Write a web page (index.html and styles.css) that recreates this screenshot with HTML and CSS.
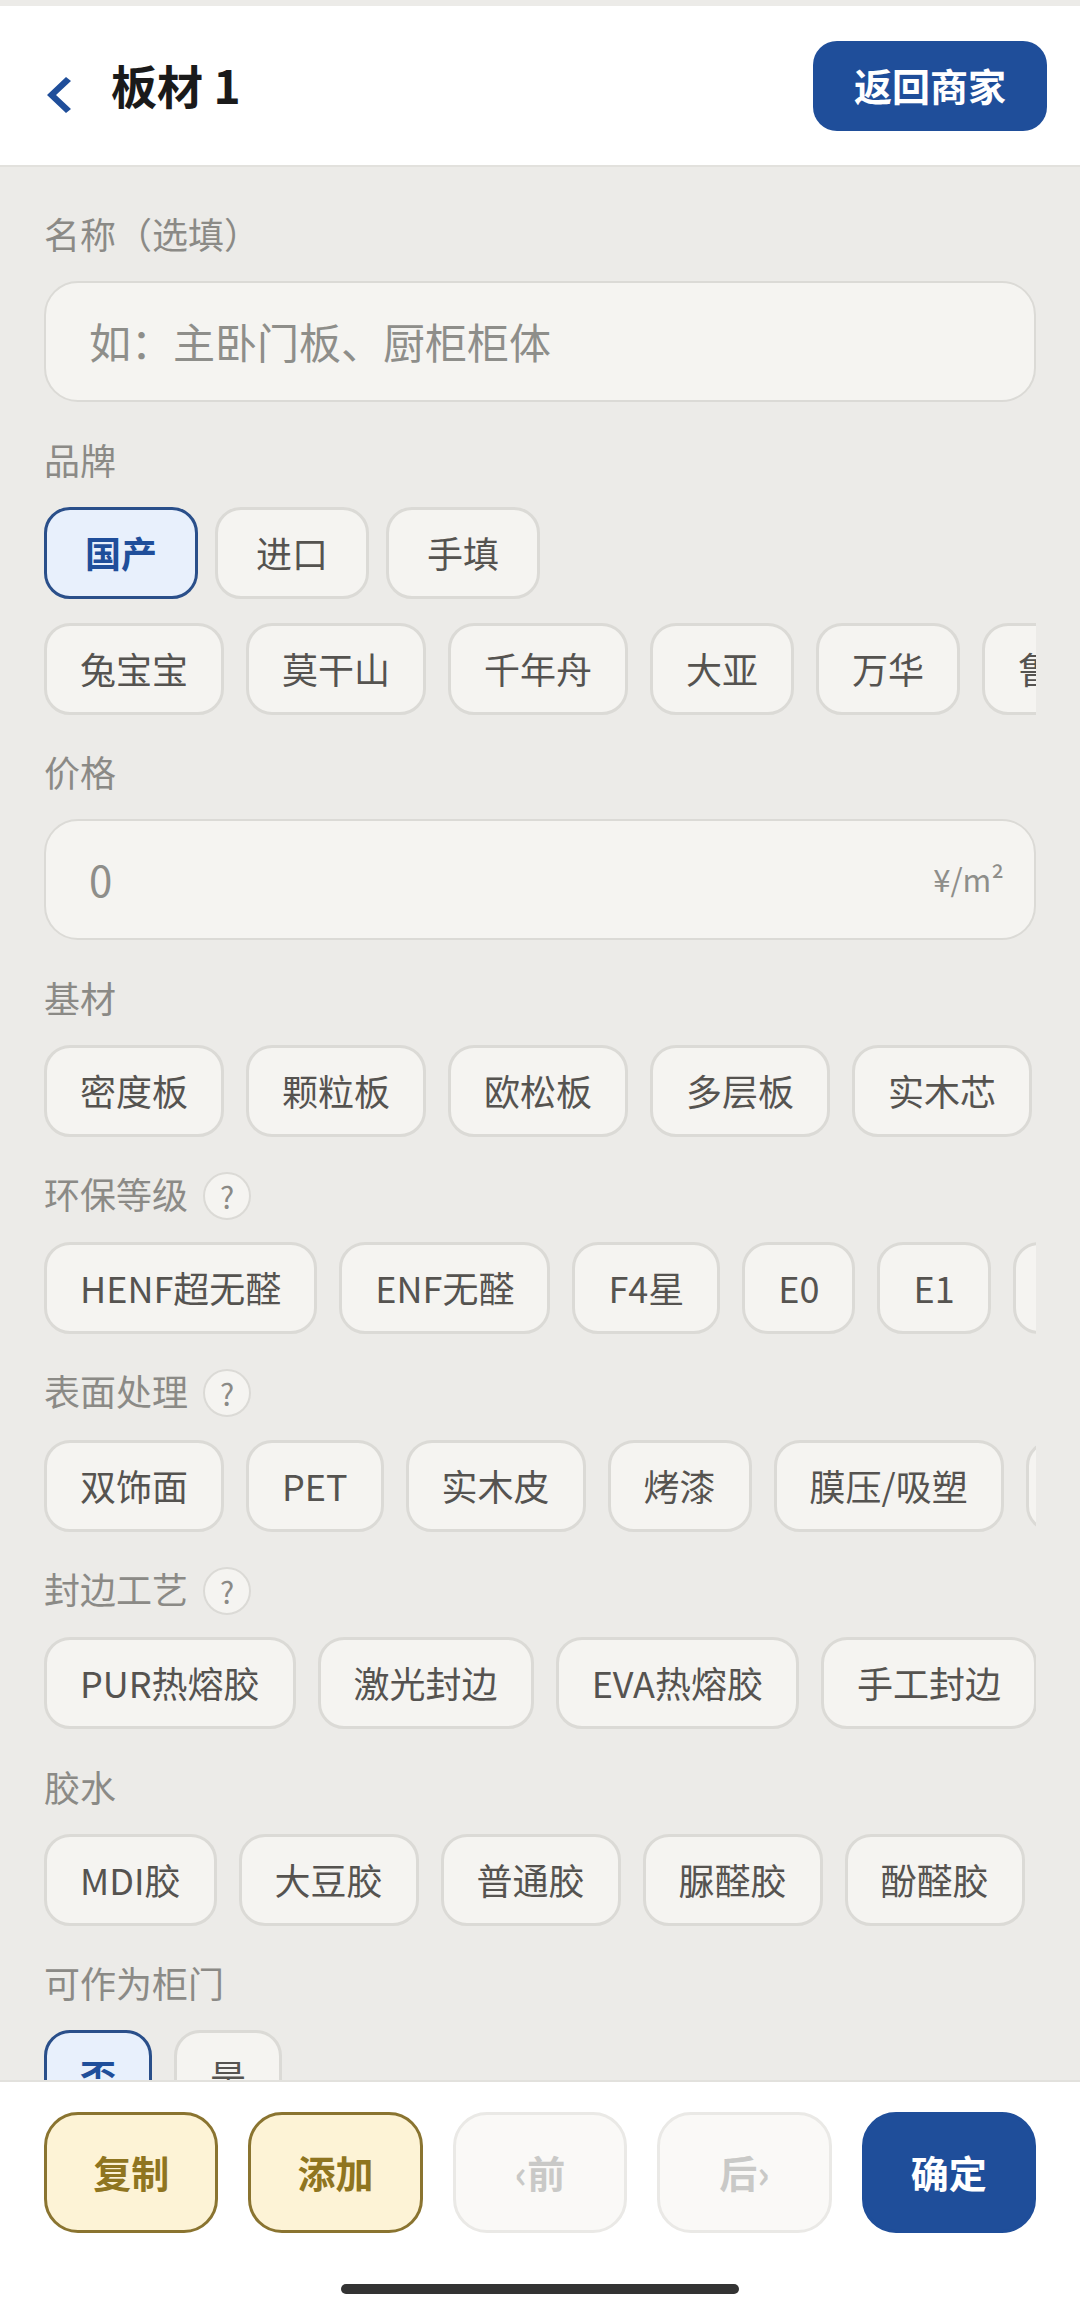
FILE: index.html
```html
<!DOCTYPE html>
<html lang="zh-CN">
<head>
    <meta charset="UTF-8">
    <meta name="viewport" content="width=device-width, initial-scale=1.0">
    <title>板材 1</title>
    <link rel="stylesheet" href="styles.css">
</head>
<body>
    <div class="app">
        <header class="topbar">
            <div class="topbar-left">
                <svg class="back-icon" viewBox="0 0 24 36" aria-hidden="true">
                    <path d="M19 0 L0 18 L19 36 L24 32 L9 18 L24 4 Z"/>
                </svg>
                <h1>板材 1</h1>
            </div>
            <button type="button" class="btn-back">返回商家</button>
        </header>

        <main class="content">
            <section class="form-group">
                <div class="group-label">名称（选填）</div>
                <div class="field"><span class="placeholder">如：主卧门板、厨柜柜体</span></div>
            </section>

            <section class="form-group">
                <div class="group-label">品牌</div>
                <div class="chip-row chip-row-wide">
                    <button type="button" class="chip chip-selected">国产</button>
                    <button type="button" class="chip">进口</button>
                    <button type="button" class="chip">手填</button>
                </div>
                <div class="chip-row chip-row-second">
                    <button type="button" class="chip">兔宝宝</button>
                    <button type="button" class="chip">莫干山</button>
                    <button type="button" class="chip">千年舟</button>
                    <button type="button" class="chip">大亚</button>
                    <button type="button" class="chip">万华</button>
                    <button type="button" class="chip">鲁丽</button>
                </div>
            </section>

            <section class="form-group">
                <div class="group-label">价格</div>
                <div class="field">
                    <span class="placeholder">0</span>
                    <span class="unit">¥/m²</span>
                </div>
            </section>

            <section class="form-group">
                <div class="group-label">基材</div>
                <div class="chip-row">
                    <button type="button" class="chip">密度板</button>
                    <button type="button" class="chip">颗粒板</button>
                    <button type="button" class="chip">欧松板</button>
                    <button type="button" class="chip">多层板</button>
                    <button type="button" class="chip">实木芯</button>
                </div>
            </section>

            <section class="form-group">
                <div class="group-label group-label-help">环保等级 <span class="help">?</span></div>
                <div class="chip-row">
                    <button type="button" class="chip">HENF超无醛</button>
                    <button type="button" class="chip">ENF无醛</button>
                    <button type="button" class="chip">F4星</button>
                    <button type="button" class="chip">E0</button>
                    <button type="button" class="chip">E1</button>
                    <button type="button" class="chip"></button>
                </div>
            </section>

            <section class="form-group">
                <div class="group-label group-label-help">表面处理 <span class="help">?</span></div>
                <div class="chip-row">
                    <button type="button" class="chip">双饰面</button>
                    <button type="button" class="chip">PET</button>
                    <button type="button" class="chip">实木皮</button>
                    <button type="button" class="chip">烤漆</button>
                    <button type="button" class="chip">膜压/吸塑</button>
                    <button type="button" class="chip"></button>
                </div>
            </section>

            <section class="form-group">
                <div class="group-label group-label-help">封边工艺 <span class="help">?</span></div>
                <div class="chip-row">
                    <button type="button" class="chip">PUR热熔胶</button>
                    <button type="button" class="chip">激光封边</button>
                    <button type="button" class="chip">EVA热熔胶</button>
                    <button type="button" class="chip">手工封边</button>
                </div>
            </section>

            <section class="form-group">
                <div class="group-label">胶水</div>
                <div class="chip-row">
                    <button type="button" class="chip">MDI胶</button>
                    <button type="button" class="chip">大豆胶</button>
                    <button type="button" class="chip">普通胶</button>
                    <button type="button" class="chip">脲醛胶</button>
                    <button type="button" class="chip">酚醛胶</button>
                </div>
            </section>

            <section class="form-group">
                <div class="group-label">可作为柜门</div>
                <div class="chip-row">
                    <button type="button" class="chip chip-selected">否</button>
                    <button type="button" class="chip">是</button>
                </div>
            </section>
        </main>

        <footer class="bottombar">
            <div class="actions">
                <button type="button" class="action action-warm">复制</button>
                <button type="button" class="action action-warm">添加</button>
                <button type="button" class="action action-off">‹前</button>
                <button type="button" class="action action-off">后›</button>
                <button type="button" class="action action-primary">确定</button>
            </div>
            <div class="home-bar"></div>
        </footer>
    </div>
</body>
</html>
```

FILE: styles.css
```css
:root {
    --blue: #1f4e9a;
    --page-bg: #ecebe8;
    --field-bg: #f5f4f1;
    --line: #dbdad6;
    --muted: #8b8a86;
}

* {
    box-sizing: border-box;
}

body {
    margin: 0;
    font-family: "Noto Sans CJK SC", "Noto Sans", sans-serif;
    background-color: var(--page-bg);
}

button {
    font-family: inherit;
    cursor: pointer;
}

.app {
    width: 1080px;
    height: 2311px;
    display: flex;
    flex-direction: column;
    overflow: hidden;
}

.topbar {
    flex: none;
    height: 161px;
    margin-top: 6px;
    padding: 0 33px 0 47px;
    display: flex;
    align-items: center;
    justify-content: space-between;
    background-color: white;
    border-bottom: 2px solid #e2e1dd;
}

.topbar-left {
    display: flex;
    align-items: center;
    gap: 40px;
}

.back-icon {
    width: 24px;
    height: 36px;
    margin-top: 18px;
    fill: var(--blue);
}

h1 {
    margin: 0 0 4px;
    font-size: 46px;
    font-weight: 700;
    line-height: 1;
    color: #1a1a1a;
}

.btn-back {
    width: 234px;
    height: 90px;
    padding-bottom: 3px;
    border: none;
    border-radius: 24px;
    font-size: 38px;
    font-weight: 700;
    color: white;
    background-color: var(--blue);
}

.content {
    flex: 1;
    min-height: 0;
    overflow: hidden;
    padding: 44px 44px 0;
}

.form-group {
    margin-bottom: 34.5px;
}

.group-label {
    height: 48px;
    margin-bottom: 22px;
    padding-bottom: 4px;
    display: flex;
    align-items: center;
    gap: 15px;
    font-size: 36px;
    color: var(--muted);
}

.group-label-help {
    height: 49px;
    padding-bottom: 6px;
}

.help {
    width: 48px;
    height: 48px;
    margin-top: 6px;
    display: flex;
    align-items: center;
    justify-content: center;
    border: 2px solid var(--line);
    border-radius: 50%;
    font-size: 30px;
    background-color: var(--field-bg);
}

.field {
    height: 121px;
    padding: 0 30px 3px 43px;
    display: flex;
    align-items: center;
    justify-content: space-between;
    border: 2px solid var(--line);
    border-radius: 34px;
    background-color: var(--field-bg);
}

.placeholder {
    font-size: 42px;
    color: #8e8e8a;
}

.unit {
    font-size: 31px;
    color: #8e8e8a;
}

.chip-row {
    display: flex;
    gap: 22px;
    overflow: hidden;
}

.chip-row-wide {
    gap: 17px;
}

.chip-row-wide .chip {
    padding: 0 38px 2px;
}

.chip-row-second {
    margin-top: 24px;
}

.chip {
    flex: none;
    height: 92px;
    padding: 0 33px 2px;
    border: 3px solid var(--line);
    border-radius: 26px;
    font-size: 36px;
    color: #555350;
    background-color: var(--field-bg);
}

.chip-selected {
    font-weight: 700;
    color: var(--blue);
    border-color: #2a4f8a;
    background-color: #e8f0fc;
}

.bottombar {
    flex: none;
    height: 231px;
    padding: 30px 44px 0;
    border-top: 2px solid #e2e1dd;
    background-color: white;
}

.actions {
    display: flex;
    gap: 30px;
}

.action {
    flex: 1;
    height: 121px;
    padding-bottom: 4px;
    border-radius: 34px;
    font-size: 38px;
    font-weight: 700;
}

.action-warm {
    color: #8f7520;
    border: 3px solid #8a7430;
    background-color: #fdf3d6;
}

.action-off {
    color: #c9c9c7;
    border: 3px solid #eae9e6;
    background-color: #faf9f7;
}

.action-primary {
    color: white;
    border: 3px solid var(--blue);
    background-color: var(--blue);
}

.home-bar {
    width: 398px;
    height: 10px;
    margin: 51px auto 0;
    border-radius: 5px;
    background-color: #333;
}
```
